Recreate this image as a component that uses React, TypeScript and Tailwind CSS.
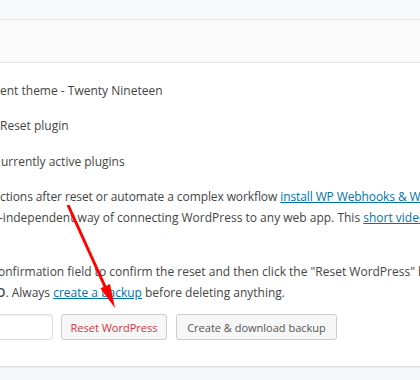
const font = { fontFamily: '"Open Sans", "Noto Sans", sans-serif' };

function Arrow() {
  return (
    <svg className="pointer-events-none absolute left-0 top-0" width="420" height="380" viewBox="0 0 420 380">
      <line x1="68" y1="205" x2="107" y2="291" stroke="#ff0000" strokeWidth="3" />
      <polygon points="115,308 100.5,288.5 110,284" fill="#ff0000" />
    </svg>
  );
}

export default function App() {
  return (
    <div className="relative h-[380px] w-[420px] overflow-hidden bg-[#f5f6f8] text-[12px] text-[#444]" style={font}>
      <div className="h-[20px] border-b border-[#e2e4e7] bg-[#f8f9fa]" />
      <div className="h-[43px] border-b border-[#e2e4e7] bg-[#fafafa]" />

      <div className="border-b border-[#dcdcde] bg-white pb-[26px] pt-[17px] shadow-[0_1px_1px_rgba(0,0,0,0.04)]">
        <div className="whitespace-nowrap leading-[21px]">ent theme - Twenty Nineteen</div>
        <div className="mt-[14px] whitespace-nowrap leading-[21px]">Reset plugin</div>
        <div className="mt-[15px] whitespace-nowrap pl-px leading-[21px]">urrently active plugins</div>

        <div className="mt-[14px] whitespace-nowrap leading-[21px]">
          <div className="tracking-[-0.1px]">
            ctions after reset or automate a complex workflow{" "}
            <a className="text-[#0073aa] underline">install WP Webhooks &amp; WP Webhooks Pro</a>
          </div>
          <div className="-ml-[1px]">
            -independent way of connecting WordPress to any web app. This{" "}
            <a className="text-[#0073aa] underline">short video</a> explains it all
          </div>
        </div>

        <div className="mt-[33px] whitespace-nowrap leading-[21px]">
          <div className="-ml-[2px]">
            onfirmation field to confirm the reset and then click the "Reset WordPress" button
          </div>
          <div className="-ml-[4px]">
            <b className="font-semibold">O</b>. Always <a className="text-[#0073aa] underline">create a backup</a> before
            deleting anything.
          </div>
        </div>

        <div className="mt-[11px] flex h-[26px] items-stretch">
          <div className="-ml-[8px] w-[61px] rounded-[3px] border border-[#ddd] bg-white shadow-[inset_0_1px_2px_rgba(0,0,0,0.07)]" />
          <button className="ml-[8px] w-[106px] rounded-[3px] border border-[#ccc] bg-[#f7f7f7] text-[11px] leading-none text-[#d0343f]">
            Reset WordPress
          </button>
          <button className="ml-[9px] w-[161px] rounded-[3px] border border-[#ccc] bg-[#f7f7f7] text-[11px] leading-none text-[#555]">
            Create &amp; download backup
          </button>
        </div>
      </div>

      <Arrow />
    </div>
  );
}
